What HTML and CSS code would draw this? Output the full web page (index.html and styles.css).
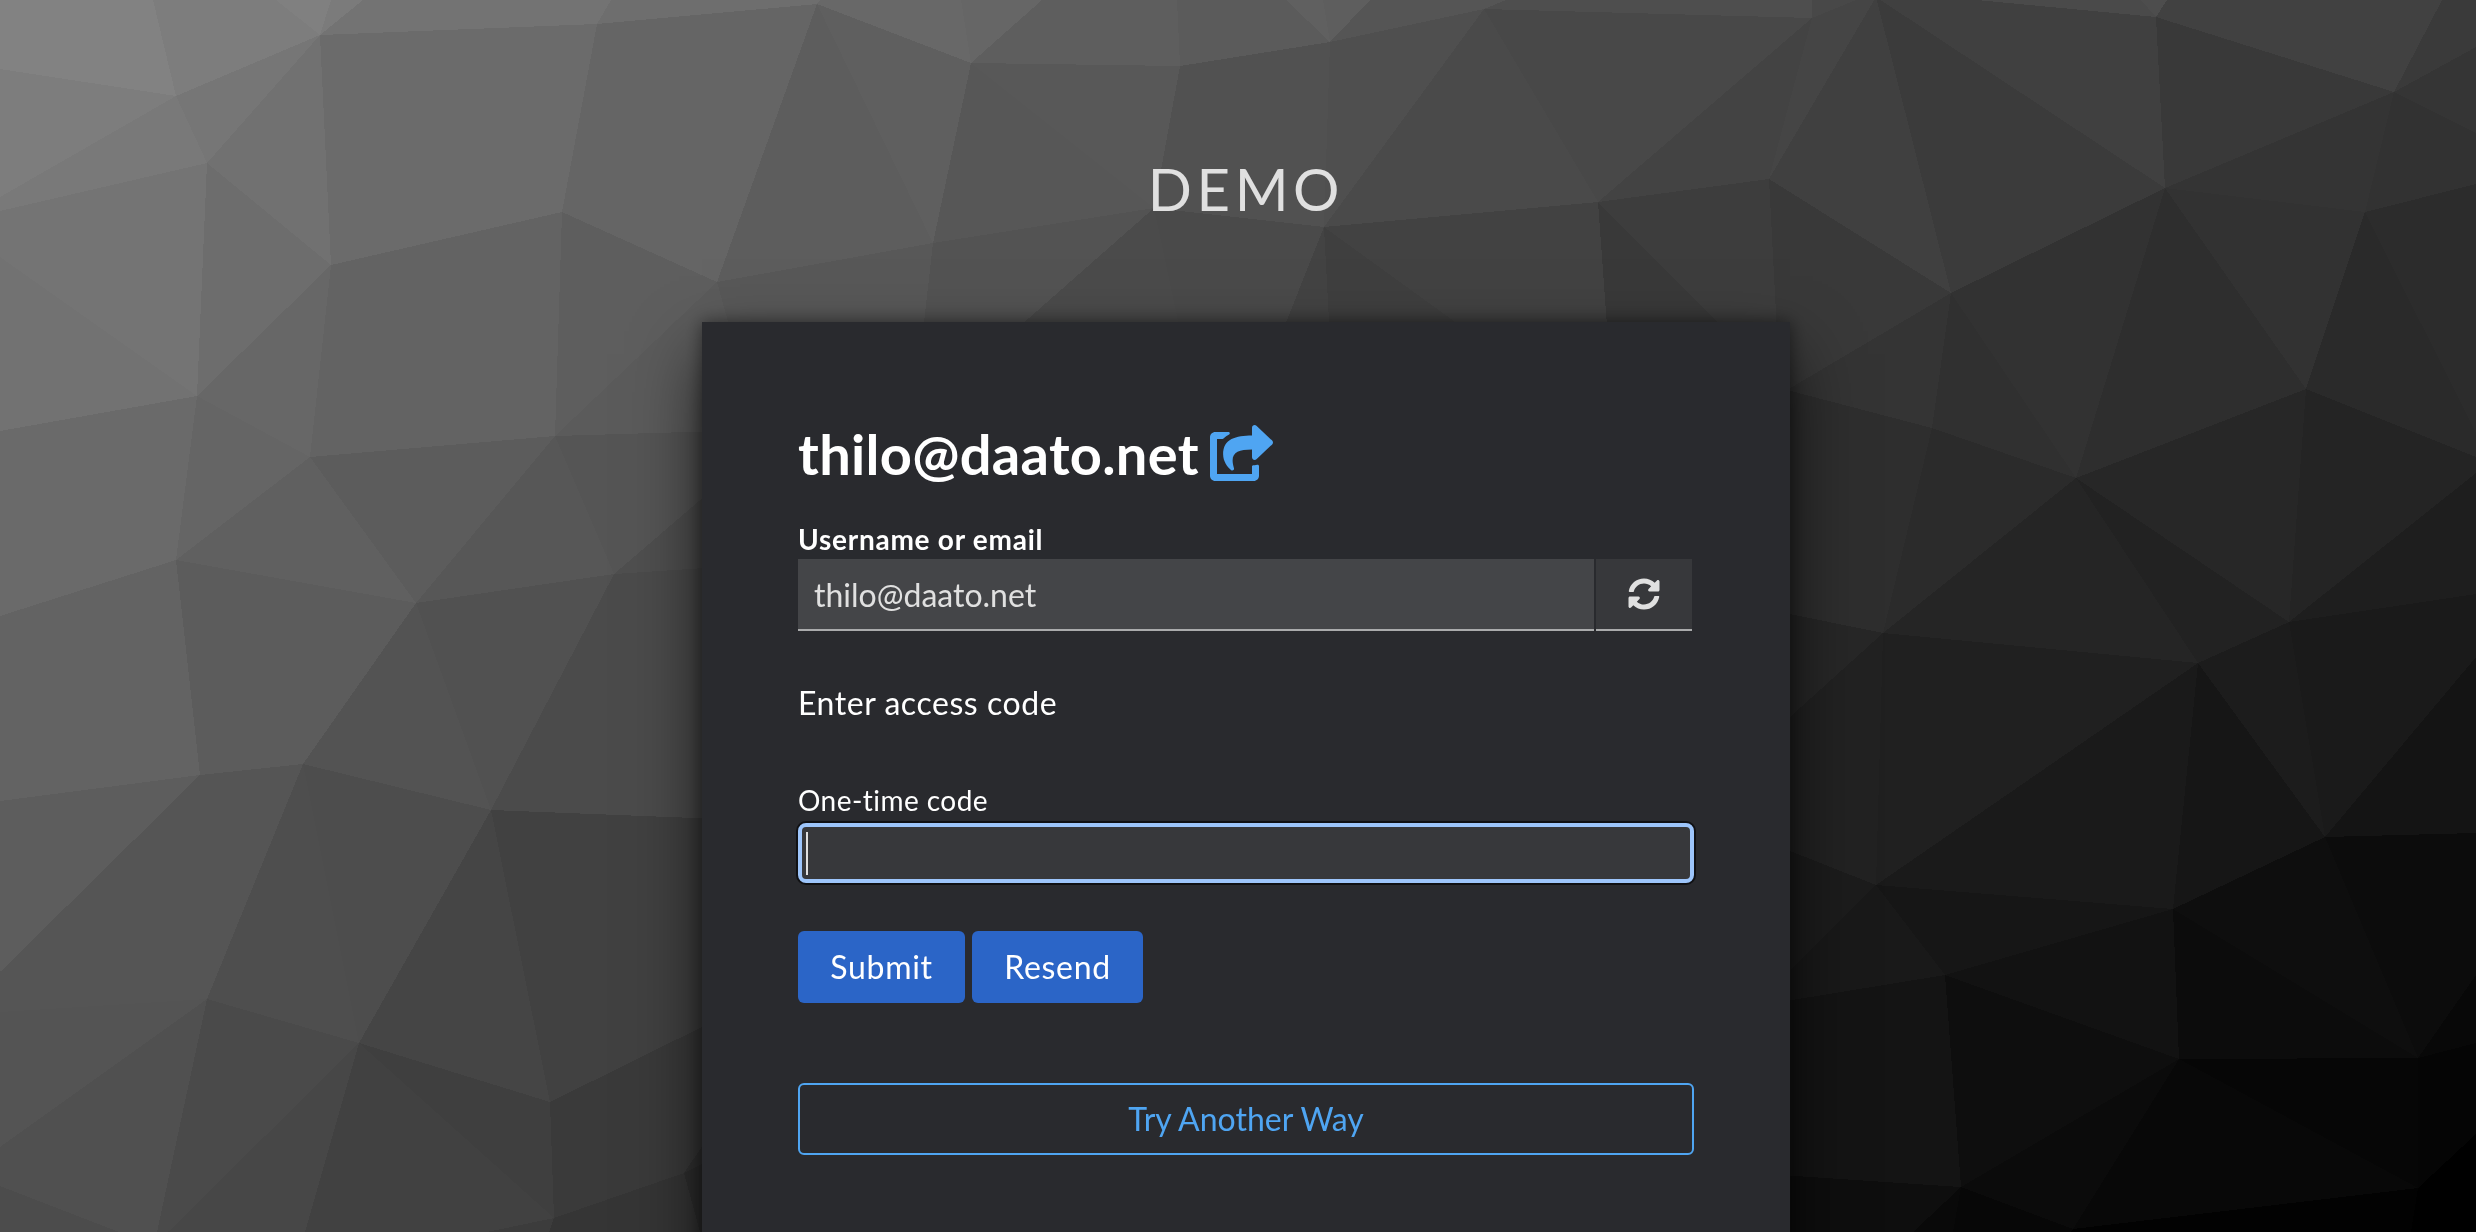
FILE: index.html
```html
<!DOCTYPE html>
<html lang="en">
<head>
    <meta charset="UTF-8">
    <meta name="viewport" content="width=device-width, initial-scale=1.0">
    <title>Demo</title>
    <link rel="stylesheet" href="styles.css">
</head>
<body>

    <!-- low-poly background -->
    <svg class="background" viewBox="0 0 2476 1232" preserveAspectRatio="xMidYMid slice" aria-hidden="true">
        <!-- left -->
        <polygon fill="#828282" points="0,0 153,0 176,96 0,69"/>
        <polygon fill="#7d7d7d" points="153,0 276,0 320,35 176,96"/>
        <polygon fill="#808080" points="276,0 331,0 320,35"/>
        <polygon fill="#7b7b7b" points="331,0 363,0 320,35"/>
        <polygon fill="#737373" points="363,0 611,0 597,24 320,35"/>
        <polygon fill="#6e6e6e" points="611,0 820,0 817,4 597,24"/>
        <polygon fill="#7d7d7d" points="0,69 176,96 0,197"/>
        <polygon fill="#797979" points="176,96 207,163 0,211 0,197"/>
        <polygon fill="#767676" points="176,96 320,35 207,163"/>
        <polygon fill="#717171" points="320,35 331,265 207,163"/>
        <polygon fill="#6b6b6b" points="320,35 597,24 562,212 331,265"/>
        <polygon fill="#656565" points="597,24 817,4 717,282 562,212"/>
        <polygon fill="#747474" points="0,211 207,163 197,396 0,257"/>
        <polygon fill="#727272" points="0,257 197,396 0,431"/>
        <polygon fill="#6d6d6d" points="207,163 331,265 197,396"/>
        <polygon fill="#676767" points="331,265 310,457 197,396"/>
        <polygon fill="#636363" points="331,265 562,212 555,436 310,457"/>
        <polygon fill="#5e5e5e" points="562,212 717,282 555,436"/>
        <polygon fill="#5b5b5b" points="717,282 733,322 733,431 555,436"/>
        <polygon fill="#6a6a6a" points="0,431 197,396 176,560 0,616"/>
        <polygon fill="#656565" points="197,396 310,457 176,560"/>
        <polygon fill="#606060" points="310,457 416,603 176,560"/>
        <polygon fill="#5c5c5c" points="310,457 555,436 416,603"/>
        <polygon fill="#575757" points="555,436 614,574 416,603"/>
        <polygon fill="#555555" points="555,436 720,431 720,483 614,574"/>
        <polygon fill="#4f4f4f" points="614,574 720,483 720,567"/>
        <polygon fill="#636363" points="0,616 176,560 200,775 0,801"/>
        <polygon fill="#5c5c5c" points="176,560 416,603 303,764 200,775"/>
        <polygon fill="#535353" points="416,603 491,810 303,764"/>
        <polygon fill="#515151" points="416,603 614,574 491,810"/>
        <polygon fill="#4b4b4b" points="614,574 720,567 720,819 491,810"/>
        <polygon fill="#5d5d5d" points="0,801 200,775 0,972"/>
        <polygon fill="#555555" points="200,775 303,764 207,999 0,1012 0,972"/>
        <polygon fill="#545454" points="0,1012 207,999 0,1147"/>
        <polygon fill="#505050" points="0,1147 207,999 157,1232 119,1232 0,1186"/>
        <polygon fill="#4c4c4c" points="0,1186 119,1232 0,1232"/>
        <polygon fill="#4e4e4e" points="303,764 359,1043 207,999"/>
        <polygon fill="#4d4d4d" points="303,764 491,810 359,1043"/>
        <polygon fill="#4a4a4a" points="207,999 359,1043 168,1232 157,1232"/>
        <polygon fill="#474747" points="359,1043 305,1232 168,1232"/>
        <polygon fill="#454545" points="491,810 550,1102 359,1043"/>
        <polygon fill="#414141" points="491,810 720,819 720,1018 550,1102"/>
        <polygon fill="#3f3f3f" points="359,1043 550,1102 554,1218"/>
        <polygon fill="#414141" points="359,1043 554,1218 487,1232 305,1232"/>
        <polygon fill="#3c3c3c" points="554,1218 549,1232 487,1232"/>
        <polygon fill="#3a3a3a" points="550,1102 720,1018 720,1120 684,1173 554,1218"/>
        <polygon fill="#353535" points="554,1218 684,1173 700,1232 549,1232"/>
        <polygon fill="#2f2f2f" points="684,1173 720,1155 720,1232 700,1232"/>

        <!-- top -->
        <polygon fill="#686868" points="820,0 961,0 971,63 817,4"/>
        <polygon fill="#666666" points="961,0 1042,0 971,63"/>
        <polygon fill="#5f5f5f" points="817,4 971,63 933,243"/>
        <polygon fill="#5d5d5d" points="817,4 933,243 717,282"/>
        <polygon fill="#5e5e5e" points="1042,0 1177,0 1180,66 971,63"/>
        <polygon fill="#5b5b5b" points="1177,0 1286,0 1330,42 1180,66"/>
        <polygon fill="#606060" points="1286,0 1323,0 1330,42"/>
        <polygon fill="#5e5e5e" points="1323,0 1370,0 1330,42"/>
        <polygon fill="#555555" points="1370,0 1506,0 1484,9 1330,42"/>
        <polygon fill="#575757" points="971,63 1154,208 933,243"/>
        <polygon fill="#585858" points="971,63 1180,66 1154,208"/>
        <polygon fill="#515151" points="1180,66 1330,42 1324,227 1154,208"/>
        <polygon fill="#4f4f4f" points="1330,42 1484,9 1324,227"/>
        <polygon fill="#585858" points="717,282 933,243 922,340 733,340"/>
        <polygon fill="#535353" points="933,243 1154,208 1004,340 922,340"/>
        <polygon fill="#4b4b4b" points="1154,208 1182,340 1004,340"/>
        <polygon fill="#4a4a4a" points="1154,208 1324,227 1279,340 1182,340"/>
        <polygon fill="#434343" points="1324,227 1330,340 1279,340"/>
        <polygon fill="#3f3f3f" points="1324,227 1480,340 1330,340"/>
        <polygon fill="#424242" points="1324,227 1598,202 1608,340 1480,340"/>
        <polygon fill="#4a4a4a" points="1484,9 1598,202 1324,227"/>
        <polygon fill="#484848" points="1484,9 1812,18 1598,202"/>
        <polygon fill="#4e4e4e" points="1506,0 1812,0 1812,18 1484,9"/>
        <polygon fill="#484848" points="1812,0 1856,0 1812,18"/>
        <polygon fill="#434343" points="1812,18 1769,179 1598,202"/>
        <polygon fill="#454545" points="1856,0 1876,-3 1769,179 1812,18"/>
        <polygon fill="#404040" points="1876,-3 1951,293 1769,179"/>
        <polygon fill="#3b3b3b" points="1876,-3 2165,188 1951,293"/>
        <polygon fill="#393939" points="1598,202 1735,340 1608,340"/>
        <polygon fill="#3d3d3d" points="1598,202 1769,179 1780,340 1735,340"/>

        <!-- right -->
        <polygon fill="#393939" points="1769,179 1951,293 1787,390 1780,390"/>
        <polygon fill="#404040" points="1876,-3 1977,0 2156,17 2165,188"/>
        <polygon fill="#4a4a4a" points="1977,0 2141,0 2156,17"/>
        <polygon fill="#4d4d4d" points="2141,0 2167,0 2156,17"/>
        <polygon fill="#414141" points="2167,0 2442,0 2394,92 2156,17"/>
        <polygon fill="#3a3a3a" points="2442,0 2476,0 2476,47 2394,92"/>
        <polygon fill="#393939" points="2156,17 2394,92 2165,188"/>
        <polygon fill="#353535" points="2394,92 2476,47 2476,133"/>
        <polygon fill="#323232" points="2394,92 2476,133 2476,184 2365,212"/>
        <polygon fill="#343434" points="2394,92 2365,212 2165,188"/>
        <polygon fill="#323232" points="2165,188 2365,212 2306,389"/>
        <polygon fill="#2e2e2e" points="2165,188 2306,389 2076,478"/>
        <polygon fill="#323232" points="1951,293 2165,188 2076,478"/>
        <polygon fill="#2a2a2a" points="2365,212 2476,433 2476,457 2306,389"/>
        <polygon fill="#2c2c2c" points="2365,212 2476,184 2476,433"/>
        <polygon fill="#242424" points="2306,389 2476,457 2476,473 2289,622"/>
        <polygon fill="#272727" points="2076,478 2306,389 2289,622"/>
        <polygon fill="#303030" points="1951,293 2076,478 1932,428"/>
        <polygon fill="#343434" points="1951,293 1932,428 1787,390"/>
        <polygon fill="#2e2e2e" points="1780,390 1787,390 1932,428 1883,633 1780,612"/>
        <polygon fill="#2b2b2b" points="1932,428 2076,478 1883,633"/>
        <polygon fill="#252525" points="2076,478 2198,663 1883,633"/>
        <polygon fill="#222222" points="2076,478 2289,622 2198,663"/>
        <polygon fill="#1e1e1e" points="2289,622 2476,473 2476,594"/>
        <polygon fill="#1a1a1a" points="2289,622 2476,594 2476,657 2325,837"/>
        <polygon fill="#1c1c1c" points="2289,622 2325,837 2198,663"/>
        <polygon fill="#161616" points="2198,663 2325,837 2173,909"/>
        <polygon fill="#1a1a1a" points="2198,663 2173,909 1876,885"/>
        <polygon fill="#202020" points="1883,633 2198,663 1876,885"/>
        <polygon fill="#272727" points="1780,612 1883,633 1780,726"/>
        <polygon fill="#222222" points="1883,633 1876,885 1780,847 1780,726"/>
        <polygon fill="#1c1c1c" points="1780,847 1876,885 1780,980"/>
        <polygon fill="#191919" points="1876,885 1945,975 1780,1002 1780,980"/>
        <polygon fill="#161616" points="1876,885 2173,909 1945,975"/>
        <polygon fill="#121212" points="1945,975 2173,909 2179,1059"/>
        <polygon fill="#141414" points="2325,837 2476,657 2476,833"/>
        <polygon fill="#0c0c0c" points="2325,837 2476,833 2476,975 2418,1058"/>
        <polygon fill="#0e0e0e" points="2325,837 2418,1058 2173,909"/>
        <polygon fill="#0c0c0c" points="2173,909 2418,1058 2179,1059"/>
        <polygon fill="#0e0e0e" points="1945,975 2179,1059 1961,1187"/>
        <polygon fill="#141414" points="1780,1002 1945,975 1961,1187 1780,1175"/>
        <polygon fill="#0b0b0b" points="2179,1059 2073,1229 1961,1187"/>
        <polygon fill="#080808" points="2179,1059 2418,1188 2073,1229"/>
        <polygon fill="#060606" points="2179,1059 2418,1058 2418,1188"/>
        <polygon fill="#080808" points="2418,1058 2476,975 2476,1043"/>
        <polygon fill="#050505" points="2418,1058 2476,1043 2476,1134 2418,1188"/>
        <polygon fill="#000000" points="2418,1188 2476,1134 2476,1232 2411,1232"/>
        <polygon fill="#020202" points="2418,1188 2411,1232 2070,1232 2073,1229"/>
        <polygon fill="#070707" points="1961,1187 2073,1229 2070,1232 1953,1232"/>
        <polygon fill="#090909" points="1961,1187 1953,1232 1913,1232"/>
        <polygon fill="#0e0e0e" points="1780,1175 1961,1187 1913,1232 1780,1232"/>
    </svg>

    <div class="login">
        <header class="login-header">Demo</header>

        <main class="card">
            <h1 class="attempt">
                <span class="attempt-user">thilo@daato.net</span>
                <svg class="icon-share" viewBox="0 0 576 512"><path fill="currentColor" d="M568.482 177.448L424.479 313.433C409.3 327.768 384 317.14 384 295.985v-71.963c-144.575.97-205.566 35.113-164.775 171.353 4.483 14.973-12.846 26.567-25.006 17.33C155.252 383.105 120 326.488 120 269.339c0-143.937 117.599-172.5 264-173.312V24.012c0-21.174 25.317-31.768 40.479-17.448l144.003 135.988c10.02 9.463 10.028 25.425 0 34.896zM384 379.128V448H64V128h50.916a11.99 11.99 0 0 0 8.648-3.693c14.953-15.568 32.237-27.89 51.014-37.676C185.708 80.83 181.584 64 169.033 64H48C21.49 64 0 85.49 0 112v352c0 26.51 21.49 48 48 48h352c26.51 0 48-21.49 48-48v-88.806c0-8.288-8.197-14.066-16.011-11.302a71.83 71.83 0 0 1-34.189 3.377c-7.27-1.046-13.8 4.514-13.8 11.859z"/></svg>
            </h1>

            <div class="label label-username">Username or email</div>
            <div class="username-group">
                <div class="username">thilo@daato.net</div>
                <button class="restart" type="button" aria-label="Restart login">
                    <svg class="icon-sync" viewBox="0 0 512 512"><path fill="currentColor" d="M370.72 133.28C339.458 104.008 298.888 87.962 255.848 88c-77.458.068-144.328 53.178-162.791 126.85-1.344 5.363-6.122 9.15-11.651 9.15H24.103c-7.498 0-13.194-6.807-11.807-14.176C33.933 94.924 134.813 8 256 8c66.448 0 126.791 26.136 171.315 68.685L463.03 40.97C478.149 25.851 504 36.559 504 57.941V192c0 13.255-10.745 24-24 24H345.941c-21.382 0-32.09-25.851-16.971-40.971l41.75-41.749zM32 296h134.059c21.382 0 32.09 25.851 16.971 40.971l-41.75 41.75c31.262 29.273 71.835 45.319 114.876 45.28 77.418-.07 144.315-53.144 162.787-126.849 1.344-5.363 6.122-9.15 11.651-9.15h57.304c7.498 0 13.194 6.807 11.807 14.176C478.067 417.076 377.187 504 256 504c-66.448 0-126.791-26.136-171.315-68.685L48.97 471.03C33.851 486.149 8 475.441 8 454.059V320c0-13.255 10.745-24 24-24z"/></svg>
                </button>
            </div>

            <p class="instruction">Enter access code</p>

            <form>
                <label class="label label-code" for="code">One-time code</label>
                <div class="code-field">
                    <span class="caret"></span>
                    <input class="code-input" id="code" type="text" autocomplete="off">
                </div>

                <div class="actions">
                    <button class="btn btn-submit" type="button">Submit</button>
                    <button class="btn btn-resend" type="button">Resend</button>
                </div>
            </form>

            <button class="btn-outline" type="button">Try Another Way</button>
        </main>
    </div>

</body>
</html>
```

FILE: styles.css
```css
* {
    box-sizing: border-box;
}
body {
    margin: 0;
    height: 1232px;
    overflow: hidden;
    background-color: #333;
    color: #fff;
    font-family: Lato, sans-serif;
    font-size: 32px;
}
button {
    font-family: inherit;
    font-size: inherit;
    padding: 0;
    border: 0;
}
.background {
    position: fixed;
    inset: 0;
    width: 100%;
    height: 100%;
    z-index: -1;
    shape-rendering: crispEdges;
}

.login {
    display: flex;
    flex-direction: column;
    align-items: center;
    padding-left: 16px;
}
.login-header {
    height: 322px;
    padding-top: 153px;
    font-size: 58px;
    line-height: 72px;
    letter-spacing: 4.6px;
    text-transform: uppercase;
    color: #e0e0e0;
}
.card {
    width: 1088px;
    height: 960px;
    padding: 96px;
    background-color: #292a2e;
    box-shadow: 0 32px 64px 0 rgba(3, 3, 3, 0.64), 0 0 16px 0 rgba(3, 3, 3, 0.48);
}

.attempt {
    display: flex;
    align-items: center;
    gap: 11px;
    height: 70px;
    margin: 0;
    font-size: 56px;
    font-weight: 700;
    letter-spacing: 0.3px;
}
.icon-share {
    width: 63px;
    height: 56px;
    color: #4fa5f2;
}

.label {
    display: block;
    height: 42px;
    font-size: 28px;
    line-height: 42px;
}
.label-username {
    margin-top: 30px;
    margin-bottom: -1px;
    font-weight: 700;
    letter-spacing: 0.75px;
}
.username-group {
    display: flex;
    gap: 2px;
    width: 894px;
    height: 72px;
}
.username {
    flex: 1;
    padding-left: 16px;
    line-height: 72px;
    color: #e0e0e0;
    background-color: #444548;
    border-bottom: 2px solid #aaabac;
}
.restart {
    display: flex;
    align-items: center;
    justify-content: center;
    width: 96px;
    color: #e0e0e0;
    background-color: #37383b;
    border-bottom: 2px solid #aaabac;
}
.icon-sync {
    width: 32px;
    height: 32px;
}

.instruction {
    margin: 48px 0 0;
    line-height: 48px;
    letter-spacing: 0.55px;
}
.label-code {
    margin-top: 52px;
    letter-spacing: 0.45px;
}
.code-field {
    display: flex;
    align-items: center;
    height: 60px;
    margin-top: 2px;
    padding-left: 4px;
    background-color: #37383b;
    border: 4px solid #9dc5fb;
    border-radius: 8px;
    box-shadow: 0 0 0 2px #101114;
}
.caret {
    width: 2px;
    height: 43px;
    background-color: #e0e0e0;
}
.code-input {
    flex: 1;
    height: 44px;
    padding: 0;
    color: #e0e0e0;
    background: transparent;
    border: 0;
    outline: 0;
    font: inherit;
}

.actions {
    display: flex;
    gap: 7px;
    margin-top: 48px;
}
.btn {
    height: 72px;
    padding-bottom: 2px;
    color: #fff;
    letter-spacing: 0.7px;
    background-color: #2b65c7;
    border-radius: 6px;
}
.btn-submit {
    width: 167px;
}
.btn-resend {
    width: 171px;
}
.btn-outline {
    width: 100%;
    height: 72px;
    margin-top: 80px;
    padding-bottom: 2px;
    color: #4fa5f2;
    background-color: transparent;
    border: 2px solid #4fa5f2;
    border-radius: 6px;
}
```
